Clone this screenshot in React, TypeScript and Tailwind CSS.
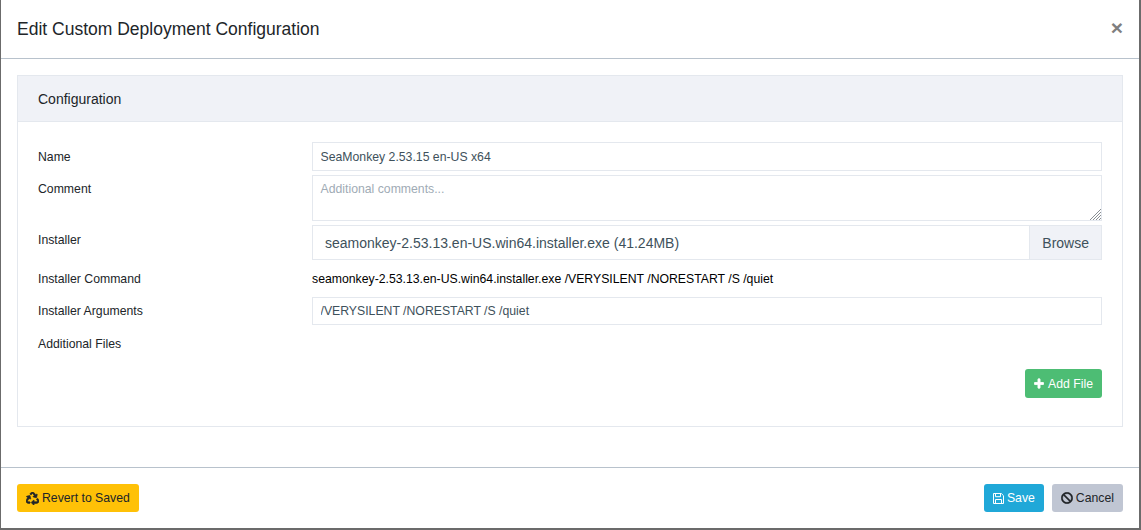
import { FaBan, FaPlus, FaRecycle } from 'react-icons/fa'

export default function App() {
  return (
    <div className="h-[530px] w-full bg-white font-['Liberation_Sans',Arial,sans-serif] text-[12.25px] text-[#212529]">
      <div className="flex h-[530px] flex-col border-b-2 border-l border-r-2 border-[#6b6b6b]">
        {/* Header */}
        <div className="flex h-[59px] shrink-0 items-center justify-between border-b border-[#b8c2cc] pl-4 pr-4">
          <h5 className="text-[17.5px] text-[#212529]">Edit Custom Deployment Configuration</h5>
          <span className="mb-1 text-[21px] leading-none font-bold text-[#7f7f7f]">×</span>
        </div>

        {/* Body */}
        <div className="flex-1 px-4 pt-4">
          <div className="border border-[#e4e8ee]">
            <div className="flex h-[46px] items-center border-b border-[#e4e8ee] bg-[#f0f2f7] px-5 text-sm">
              Configuration
            </div>
            <div className="h-[304px] px-5 pt-5">
              <div className="grid grid-cols-[274px_1fr]">
                <label className="pt-px leading-[28px]">Name</label>
                <input
                  readOnly
                  value="SeaMonkey 2.53.15 en-US x64"
                  className="h-[29px] w-full border border-[#e4e8ee] px-[7.5px] text-[12.25px] text-[#3e515b] outline-none"
                />

                <label className="mt-1 pt-px leading-[27px]">Comment</label>
                <div className="relative mt-1 h-[46px]">
                  <textarea
                    readOnly
                    placeholder="Additional comments..."
                    className="block h-full w-full resize-none border border-[#e4e8ee] px-[7.5px] py-1 text-[12.25px] text-[#3e515b] outline-none placeholder:text-[#a0abb5]"
                  />
                  {/* resize grip */}
                  <svg className="absolute right-px bottom-px h-[11px] w-[11px]" viewBox="0 0 11 11" stroke="#8a8f94" strokeWidth="1">
                    <path d="M0 11 11 0M3 11l8-8M6 11l5-5M9 11l2-2" />
                  </svg>
                </div>

                <label className="mt-1 pt-px leading-[29px]">Installer</label>
                <div className="mt-1 flex h-[35px] border border-[#e4e8ee] text-sm text-[#3e515b]">
                  <div className="flex flex-1 items-center px-3">seamonkey-2.53.13.en-US.win64.installer.exe (41.24MB)</div>
                  <div className="flex items-center border-l border-[#e4e8ee] bg-[#f0f2f7] px-3">Browse</div>
                </div>

                <label className="mt-2 pt-px leading-[21px]">Installer Command</label>
                <div className="mt-2 pt-px leading-[21px] text-black">seamonkey-2.53.13.en-US.win64.installer.exe /VERYSILENT /NORESTART /S /quiet</div>

                <label className="mt-[7px] leading-[28px]">Installer Arguments</label>
                <input
                  readOnly
                  value="/VERYSILENT /NORESTART /S /quiet"
                  className="mt-[7px] h-[28px] w-full border border-[#e4e8ee] px-[7.5px] text-[12.25px] text-[#3e515b] outline-none"
                />

                <label className="mt-2 leading-[22px]">Additional Files</label>
                <div />
              </div>
              <div className="mt-[14px] flex justify-end">
                <button className="flex h-[29px] items-center gap-1 rounded-[3px] bg-[#4dbd74] px-[9px] pt-px text-[12.25px] text-white">
                  <FaPlus className="-mt-px h-[11px] w-[10px]" stroke="currentColor" strokeWidth={40} /> Add File
                </button>
              </div>
            </div>
          </div>
        </div>

        {/* Footer */}
        <div className="flex h-[61px] shrink-0 items-start justify-between border-t border-[#b8c2cc] px-4 pt-4">
          <button className="flex h-[28px] items-center gap-[3px] rounded-[3px] bg-[#ffc107] px-[9px] pt-px text-[12.25px]">
            <FaRecycle className="-mt-px h-[13px] w-[13px]" stroke="currentColor" strokeWidth={25} /> Revert to Saved
          </button>
          <div className="flex gap-2">
            <button className="flex h-[28px] items-center gap-[3px] rounded-[3px] bg-[#20a8d8] px-[9px] pt-px text-[12.25px] text-white">
              <svg className="-mt-px h-[11px] w-[11px]" viewBox="0 0 11 11" fill="none" stroke="currentColor" strokeWidth="1">
                <path d="M.5.5h7.8l2.2 2.2v7.8H.5z" />
                <path d="M2.5.5v3.2h5V.5M2.5 10.5V6.5h6v4" />
              </svg>
              Save
            </button>
            <button className="flex h-[28px] items-center gap-[3px] rounded-[3px] bg-[#c0c6d3] px-[9px] pt-px text-[12.25px]">
              <FaBan className="-mt-px h-[12px] w-[12px]" stroke="currentColor" strokeWidth={15} /> Cancel
            </button>
          </div>
        </div>
      </div>
    </div>
  )
}
